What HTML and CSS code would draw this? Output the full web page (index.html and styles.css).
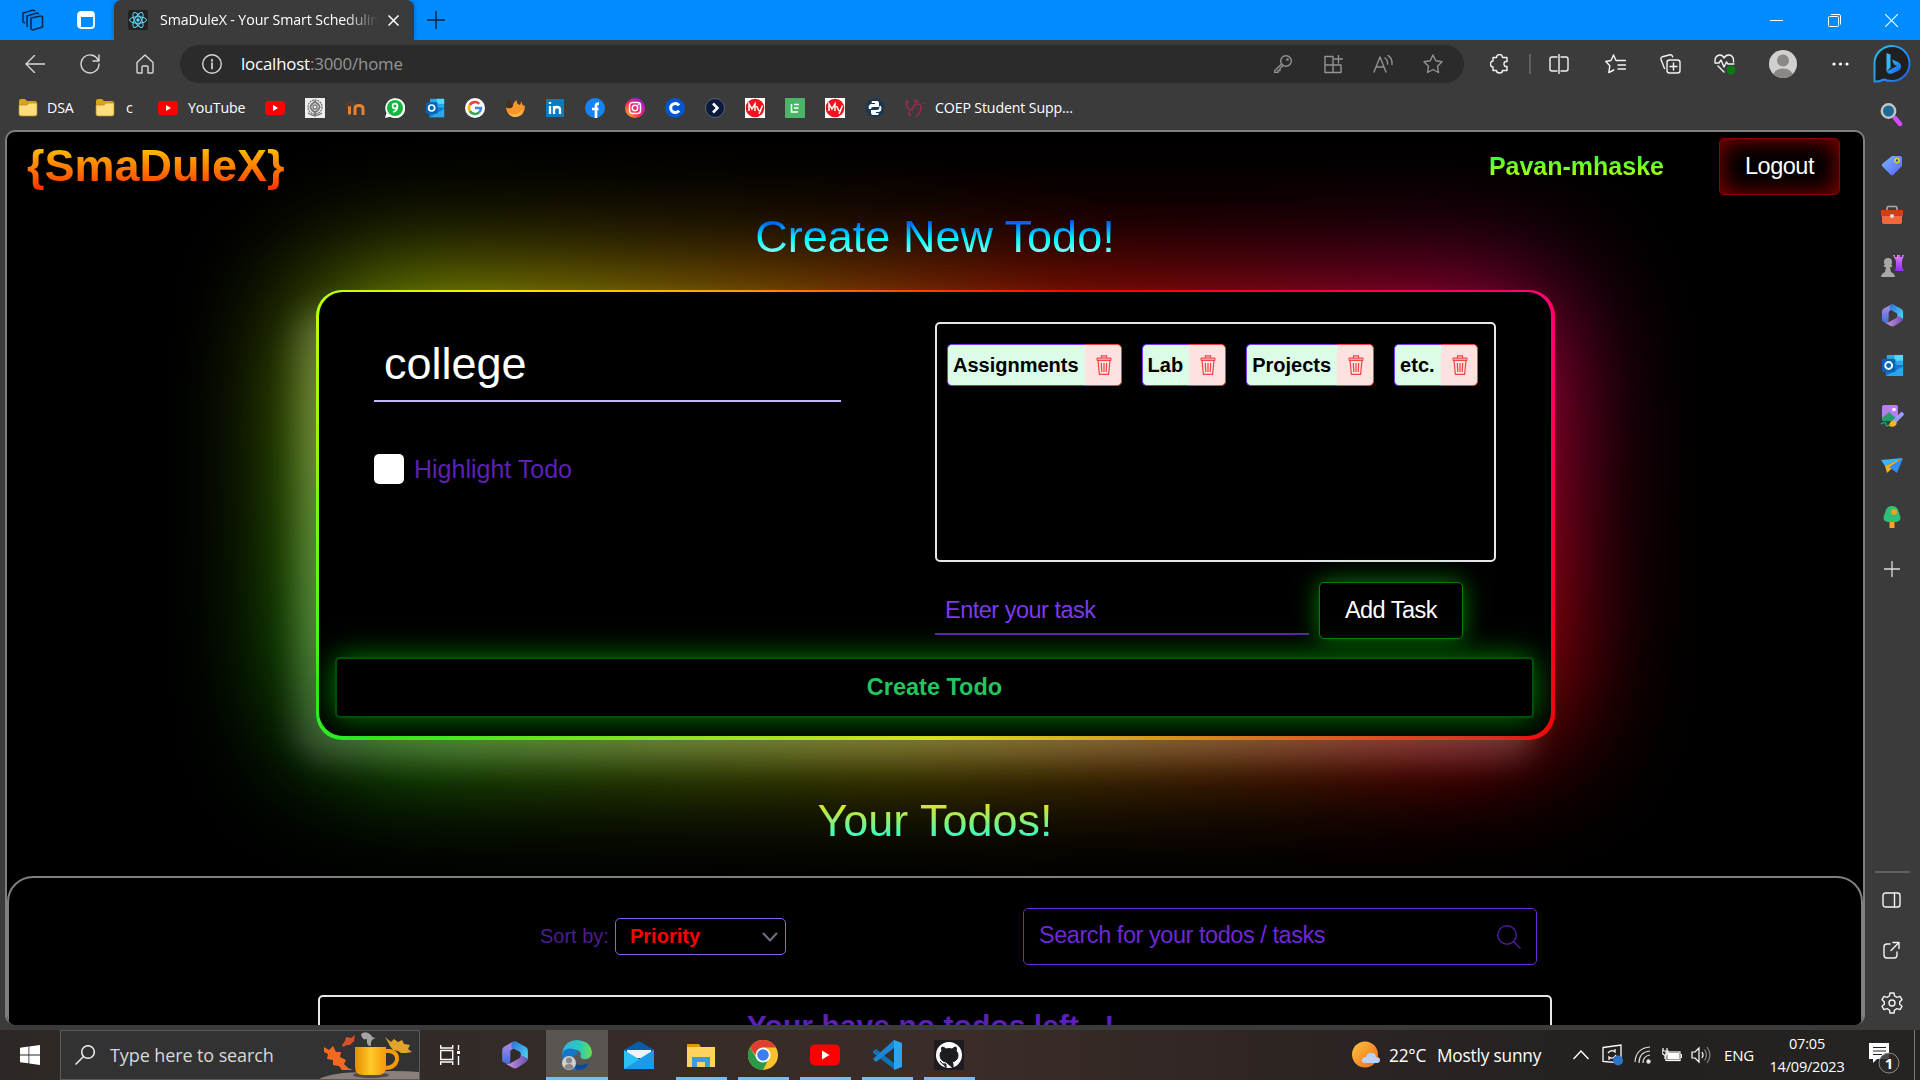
FILE: index.html
```html
<!DOCTYPE html>
<html lang="en">
<head>
<meta charset="utf-8">
<title>SmaDuleX - Your Smart Scheduling</title>
<link rel="stylesheet" href="styles.css">
</head>
<body>
<svg class="defs" width="0" height="0">
  <defs>
    <linearGradient id="gM1" x1="0" y1="0" x2="0" y2="1"><stop offset="0" stop-color="#b98ae8"/><stop offset="1" stop-color="#3b6fe0"/></linearGradient>
    <linearGradient id="gM2" x1="0" y1="0" x2="1" y2="1"><stop offset="0" stop-color="#2a6fd6"/><stop offset="1" stop-color="#4fdcf5"/></linearGradient>
    <linearGradient id="gM3" x1="0" y1="0" x2="1" y2="0"><stop offset="0" stop-color="#d49ae8"/><stop offset="1" stop-color="#6a4fb0"/></linearGradient>
    <linearGradient id="gIg" x1="0" y1="1" x2="1" y2="0"><stop offset="0" stop-color="#ffd000"/><stop offset=".45" stop-color="#ff1f60"/><stop offset="1" stop-color="#8a20ff"/></linearGradient>
    <linearGradient id="gBing" x1="0" y1="0" x2="1" y2="1"><stop offset="0" stop-color="#27c6f5"/><stop offset="1" stop-color="#1f5ee8"/></linearGradient>
    <linearGradient id="gEdge" x1="0" y1="0" x2="1" y2="0"><stop offset="0" stop-color="#2fb4e8"/><stop offset=".6" stop-color="#2cc8b8"/><stop offset="1" stop-color="#6be04a"/></linearGradient>
    <linearGradient id="gTag" x1="0" y1="0" x2="1" y2="1"><stop offset="0" stop-color="#7db8ff"/><stop offset="1" stop-color="#5a62ff"/></linearGradient>
    <linearGradient id="gMug" x1="0" y1="0" x2="1" y2="0"><stop offset="0" stop-color="#e88a00"/><stop offset=".5" stop-color="#ffc928"/><stop offset="1" stop-color="#f59a0c"/></linearGradient>
    <linearGradient id="gSun" x1="0" y1="0" x2="1" y2="1"><stop offset="0" stop-color="#f9c440"/><stop offset="1" stop-color="#f5681a"/></linearGradient>
    <linearGradient id="gRook" x1="0" y1="0" x2="0" y2="1"><stop offset="0" stop-color="#e07cff"/><stop offset="1" stop-color="#8d2df0"/></linearGradient>
  </defs>
  <symbol id="folder" viewBox="0 0 20 20"><path d="M1 3q0-2 2-2h4l2 2h8q2 0 2 2v4H1z" fill="#d9a514"/><path d="M1 7h8l2-2h8v11q0 2-2 2H3q-2 0-2-2z" fill="#ffdf7d" stroke="#b08a25" stroke-width=".7"/></symbol>
  <symbol id="yt" viewBox="0 0 20 20"><rect y="3" width="20" height="14" rx="3.2" fill="#f00"/><path d="M8 7l5 3-5 3z" fill="#fff"/></symbol>
  <symbol id="m365" viewBox="0 0 24 24"><path d="M10.500.5 2.500 5Q1 6 1 8v8.500q0 1.500 1.500 2l3 1q2 .5 2.500-2V9q0-1 1-1.600L14 4z" fill="url(#gM1)"/><path d="M9 1.500 12 0l9 5q2 1 2 3v8l-6-2.500V11q0-1-1-1.700L9 5.500z" fill="url(#gM2)"/><path d="M23 15q0 2-2 3.500L14 23q-2 1-4 0l-6.500-4q3 1 4.500 0l8-4.500q1-.7 1-2.500z" fill="url(#gM3)"/></symbol>
  <symbol id="outlook" viewBox="0 0 24 24"><path d="M6 1h17v11H6z" fill="#28a8ea"/><path d="M14 1h9v6h-9z" fill="#50d9ff"/><path d="M5 10l18 2v11H5z" fill="#1477c9"/><path d="M5 23l18-10v10z" fill="#28a8ea"/><rect x="1" y="5" width="14" height="14" rx="1.500" fill="#0364b8"/><circle cx="8" cy="12" r="3.600" fill="none" stroke="#fff" stroke-width="2"/></symbol>
  <symbol id="my" viewBox="0 0 20 20"><path d="M0 0h20v20H0z" fill="#fff"/><circle cx="10" cy="10" r="9.300" fill="#f0121c"/><path d="M4 13V6l3 5 3-5v7M11.500 8l2.500 5M17.500 7.500 14 16" fill="none" stroke="#fff" stroke-width="1.500"/></symbol>
  <symbol id="trash" viewBox="0 0 16 20"><path d="M1 3h14v2.500H1z" fill="#fca5a5" stroke="#ef4444"/><path d="M5.500 3V.8h5V3M2 5.500l1.400 13.800h9.200L14 5.500M5.300 8l.5 9M8 8v9M10.700 8l-.5 9" fill="none" stroke="#ef4444" stroke-width="1.200"/></symbol>
</svg>

<header class="tabs">
  <div class="cell tabtool"><svg width="22" height="24" viewBox="0 0 22 24" fill="none" stroke="#082a4c" stroke-width="1.600" stroke-linejoin="round"><path d="m9 10 10-2 1.500 1v10L11 22l-2-1z"/><path d="M6 19 5 18V8l10-3 2 1M3 15l-2-1V5l10-3 2 1"/></svg></div>
  <div class="cell tabtool"><svg width="18" height="18" viewBox="0 0 18 18"><rect x="1" y="1" width="16" height="16" rx="3" fill="none" stroke="#fff" stroke-width="1.800"/><path d="M1 2h16v4H1zM1 5h3v11H1z" fill="#fff"/></svg></div>
  <div class="tab">
    <svg width="20" height="20" viewBox="0 0 20 20"><rect width="20" height="20" rx="2" fill="#222"/><g fill="none" stroke="#61dafb"><ellipse cx="10" cy="10" rx="8.500" ry="3.300"/><ellipse cx="10" cy="10" rx="8.500" ry="3.300" transform="rotate(60 10 10)"/><ellipse cx="10" cy="10" rx="8.500" ry="3.300" transform="rotate(120 10 10)"/></g><circle cx="10" cy="10" r="1.700" fill="#61dafb"/></svg>
    <span class="tab-title">SmaDuleX - Your Smart Scheduling</span>
    <svg width="11" height="11" viewBox="0 0 11 11" stroke="#fff" stroke-width="1.500"><path d="m.5.5 10 10m0-10-10 10"/></svg>
  </div>
  <svg class="newtab" width="18" height="18" viewBox="0 0 18 18" stroke="#05203c" stroke-width="1.400"><path d="M9 0v18M0 9h18"/></svg>
  <div class="winbtns">
    <svg width="13" height="13" viewBox="0 0 13 13" stroke="#fff"><path d="M0 6.500h13"/></svg>
    <svg width="13" height="13" viewBox="0 0 13 13" fill="none" stroke="#fff"><rect x=".5" y="2.500" width="10" height="10" rx="1"/><path d="M3 .5h8q1.500 0 1.500 1.500v8.500"/></svg>
    <svg width="13" height="13" viewBox="0 0 13 13" stroke="#fff" stroke-width="1.100"><path d="m0 0 13 13m0-13L0 13"/></svg>
  </div>
</header>

<nav class="toolbar">
  <div class="cell w55"><svg width="20" height="18" viewBox="0 0 20 18" class="ln"><path d="M20 9H1m8.500-8.500L1 9l8.500 8.500"/></svg></div>
  <div class="cell w55"><svg width="20" height="20" viewBox="0 0 20 20" class="ln"><path d="M18.500 7A9 9 0 1 0 19 10M19 1v6h-6"/></svg></div>
  <div class="cell w55"><svg width="18" height="20" viewBox="0 0 18 20" class="ln"><path d="M1 8.500 9 1l8 7.500V18q0 1-1 1h-4v-6q0-1-1-1H7q-1 0-1 1v6H2q-1 0-1-1z"/></svg></div>
  <div class="address">
    <svg width="20" height="20" viewBox="0 0 20 20" class="ln"><circle cx="10" cy="10" r="9.300"/><path d="M10 9v5.500M10 5.500v1.500" stroke-width="1.700"/></svg>
    <span class="url">localhost<i>:3000/home</i></span>
    <div class="dim">
      <div class="cell w50"><svg width="18" height="18" viewBox="0 0 18 18" class="ln"><circle cx="12" cy="6" r="5.300"/><path d="m7.500 9-7 7v1.500H4v-2h2v-2l3-3"/><circle cx="13.500" cy="4.500" r=".6"/></svg></div>
      <div class="cell w50"><svg width="19" height="19" viewBox="0 0 19 19" class="ln"><path d="M9 1.500H1v16h16V10H1M9 1.500v16M14.500 0v8M10.500 4h8"/></svg></div>
      <div class="cell w50"><svg width="20" height="18" viewBox="0 0 20 18" class="ln"><path d="M1 17 7 2l6 15M3 12h8M12 3q3 2 2.500 6M15 .5q4.500 3 4 9"/></svg></div>
      <div class="cell w50"><svg width="20" height="20" viewBox="0 0 20 20" class="ln"><path d="m10 1 2.800 5.800 6.200.9-4.500 4.500 1 6.300L10 15.500l-5.500 3 1-6.300L1 7.700l6.200-.9z"/></svg></div>
    </div>
  </div>
  <div class="cell w50 ext"><svg width="20" height="20" viewBox="0 0 20 20" class="ln lit"><path d="M3 3.500h3.500q0-3 3-3t3 3H17v4q-3-.5-3 2.500t3 2.500v4h-4.500q0 2.500-3 2.500t-3-2.500H3V13q-2.500 0-2.500-3T3 7z"/></svg></div>
  <div class="sep"></div>
  <div class="cell w46"><svg width="20" height="20" viewBox="0 0 20 20" class="ln lit"><path d="M8 3H3Q1 3 1 5v10q0 2 2 2h5M12 3h5q2 0 2 2v10q0 2-2 2h-5M10 0v20"/></svg></div>
  <div class="cell w56 push5"><svg width="21" height="20" viewBox="0 0 21 20" class="ln lit"><path d="m11 6.500-2.500-5.500L6 6.500.8 7.500l4 4.300-1 6.700 5-2.500M8.500 1 11 6.500h9.500M13 11h7.500M13 15h7.500"/></svg></div>
  <div class="cell w54"><svg width="21" height="20" viewBox="0 0 21 20" class="ln lit"><rect x="7" y="6" width="13" height="13" rx="2.500"/><path d="M13.500 9v7M10 12.500h7M4.500 14.500 1 5.500Q.5 3.500 2.500 2.700L10 .8q2-.5 2.700 2"/></svg></div>
  <div class="cell w56"><svg width="22" height="21" viewBox="0 0 22 21" class="ln lit"><path d="M1 8q-.5-6 4.500-7Q9 .8 10 4q2-3.500 5.500-3Q20 2 19.500 8M1 9h4l2-3 3 7 2.500-5 1.500 2h6M4 12l6 6"/><circle cx="17" cy="16" r="4.500" fill="#0c7a12" stroke="none"/></svg></div>
  <div class="cell w56 push2"><svg width="28" height="28" viewBox="0 0 28 28"><clipPath id="av"><circle cx="14" cy="14" r="14"/></clipPath><circle cx="14" cy="14" r="14" fill="#d2d0ce"/><circle cx="14" cy="10.500" r="6" fill="#8a8886"/><ellipse cx="14" cy="27" rx="10.500" ry="8.500" fill="#8a8886" clip-path="url(#av)"/></svg></div>
  <div class="cell w58"><svg width="17" height="4" viewBox="0 0 17 4" fill="#fff"><circle cx="2" cy="2" r="1.600"/><circle cx="8.500" cy="2" r="1.600"/><circle cx="15" cy="2" r="1.600"/></svg></div>
  <div class="cell w46"><svg width="38" height="38" viewBox="0 0 38 38"><path d="M1.500 36.500V18A17.500 17.500 0 1 1 19 36q-5 0-8-1.500-5 2.500-9.500 2z" fill="#202020" stroke="url(#gBing)" stroke-width="2"/><path d="m13.500 8 4 1.500v13l-4 4z" fill="#35b8f5"/><path d="M13.500 26.500q1.500 2.500 4.500 2.500l6-2.500q5-2.500 4-6.500-1-2-3-3l-6-2.500 2 5 3 1.500z" fill="url(#gBing)"/></svg></div>
</nav>

<nav class="bookmarks">
  <svg width="20" height="20"><use href="#folder"/></svg><span class="bm dsa">DSA</span>
  <svg width="20" height="20"><use href="#folder"/></svg><span class="bm c">c</span>
  <svg width="20" height="20"><use href="#yt"/></svg><span class="bm ytb">YouTube</span>
  <div class="favs">
    <svg width="20" height="20"><use href="#yt"/></svg>
    <svg width="20" height="20" viewBox="0 0 20 20"><path d="M0 0h20v20H0z" fill="#eee"/><g fill="none" stroke="#777" stroke-width="1.300"><circle cx="10" cy="9" r="7" stroke-dasharray="2 .7"/><circle cx="10" cy="9" r="4.500"/><circle cx="10" cy="9" r="2"/><path d="m10 3 5 6-5 6-5-6zM3 15q7 5 14 0M10 14v5"/></g></svg>
    <svg width="20" height="20" viewBox="0 0 20 20" fill="none" stroke="#e8822c" stroke-width="3"><path d="M4.500 8v8.500M10 17v-7q0-2.500 4-2.500t4 3V17"/><path d="m0 7 6-3 3 2-5 2M2 7v3" stroke="#54433a" stroke-width="1.500"/></svg>
    <svg width="20" height="20" viewBox="0 0 20 20"><path d="M0 20 1.500 15A10 10 0 1 1 5 18.700z" fill="#fff"/><circle cx="10" cy="10" r="8" fill="#10b83c"/><circle cx="10" cy="8" r="2.400" fill="none" stroke="#fff" stroke-width="1.700"/><path d="M12.400 8q0 5-4.400 6" fill="none" stroke="#fff" stroke-width="1.700"/></svg>
    <svg width="20" height="20"><use href="#outlook"/></svg>
    <svg width="20" height="20" viewBox="0 0 20 20"><circle cx="10" cy="10" r="10" fill="#fff"/><g fill="none" stroke-width="2.600"><path d="M14.200 5.800A6 6 0 0 0 4.800 7" stroke="#ea4335"/><path d="M4.800 7a6 6 0 0 0 0 6" stroke="#fbbc05"/><path d="M4.800 13a6 6 0 0 0 9.200 1.400" stroke="#34a853"/><path d="M14 14.400a6 6 0 0 0 2-4.400h-6" stroke="#4285f4"/></g></svg>
    <svg width="20" height="20" viewBox="0 0 20 20"><path d="M1 9q4 3 7-1 0-4 4-6-1 4 3 5 1-3 2-4-1 4 3 5 0 10-9 11Q2 19 1 9z" fill="#f5962a"/><path d="M1 9q4 3 7-1l-2-3-2-4-2 3z" fill="#42301c"/><path d="M4 15q7 4 14-4-1 8-8 8-4 0-6-4z" fill="#ffb64a"/></svg>
    <svg width="20" height="20" viewBox="0 0 20 20"><rect x="1" y="1" width="18" height="18" fill="#0a7bbd"/><path d="M5 8v8M5 4v2M9 16V8m0 4q0-3 3-3t3 3v4" fill="none" stroke="#fff" stroke-width="2.300"/></svg>
    <svg width="20" height="20" viewBox="0 0 20 20"><circle cx="10" cy="10" r="10" fill="#1683f5"/><path d="M11 20V8q0-2.500 3-2.300M7 11h6.500" fill="none" stroke="#fff" stroke-width="2.700"/></svg>
    <svg width="20" height="20" viewBox="0 0 20 20"><circle cx="10" cy="10" r="10" fill="url(#gIg)"/><g fill="none" stroke="#fff" stroke-width="1.500"><rect x="4.500" y="4.500" width="11" height="11" rx="3"/><circle cx="10" cy="10" r="2.700"/></g><circle cx="13.300" cy="6.700" r=".8" fill="#fff"/></svg>
    <svg width="20" height="20" viewBox="0 0 20 20"><circle cx="10" cy="10" r="10" fill="#0056d2"/><path d="M14 7.300a4.600 4.600 0 1 0 0 5.400" fill="none" stroke="#fff" stroke-width="3"/></svg>
    <svg width="20" height="20" viewBox="0 0 20 20"><circle cx="10" cy="10" r="9.500" fill="#0b1a3c" stroke="#59617a"/><path d="m8 5.500 4.500 4.500L8 14.500" fill="none" stroke="#fff" stroke-width="2.500"/></svg>
    <svg width="20" height="20"><use href="#my"/></svg>
    <svg width="20" height="20" viewBox="0 0 20 20"><path d="M0 0h20v20H0z" fill="#4cb466"/><path d="M6.500 6v8H13M9 6.500h5M9 10h4.500" fill="none" stroke="#fff" stroke-width="1.500"/></svg>
    <svg width="20" height="20"><use href="#my"/></svg>
    <svg width="20" height="20" viewBox="0 0 20 20"><circle cx="10" cy="10" r="9.500" fill="#173850"/><path d="M7 3h5q2 0 2 2v4H8q-2 0-2 2H4q-1.500-4 2-5h4V5H6.500zM13 17H8q-2 0-2-2v-3h6q2.500 0 2.500-4H16q1.500 5-2 6h-3v1h3z" fill="#fff"/></svg>
    <svg width="20" height="20" viewBox="0 0 20 20" fill="none" stroke="#962a50" stroke-width="1.700"><path d="M1 5q1 7 6 7 1-5 5-6 4 0 4 3 0 6-5 10M4 13q-1 3 2 5M18 5l1 1"/><circle cx="11" cy="3" r="1"/><circle cx="2" cy="4" r="1"/></svg>
  </div>
  <span class="bm coep">COEP Student Supp...</span>
</nav>

<div class="workspace">
  <main class="page">
    <div class="topbar">
      <div class="logo">{SmaDuleX}</div>
      <div class="user">Pavan-mhaske</div>
      <button class="btn logout">Logout</button>
    </div>
    <h1 class="title create-title">Create New Todo!</h1>
    <section class="card">
      <div class="rainbow glow"></div>
      <div class="rainbow frame"></div>
      <div class="card-body">
        <div class="columns">
          <div class="left">
            <div class="name-input">college</div>
            <label class="check"><span class="box"></span>Highlight Todo</label>
          </div>
          <div class="right">
            <div class="tasks">
              <div class="chip"><span>Assignments</span><b><svg width="16" height="20"><use href="#trash"/></svg></b></div>
              <div class="chip"><span>Lab</span><b><svg width="16" height="20"><use href="#trash"/></svg></b></div>
              <div class="chip"><span>Projects</span><b><svg width="16" height="20"><use href="#trash"/></svg></b></div>
              <div class="chip"><span>etc.</span><b><svg width="16" height="20"><use href="#trash"/></svg></b></div>
            </div>
            <div class="add-row">
              <div class="task-input">Enter your task</div>
              <button class="btn add">Add Task</button>
            </div>
          </div>
        </div>
        <button class="btn create">Create Todo</button>
      </div>
    </section>
    <h1 class="title todos-title">Your Todos!</h1>
    <section class="todos">
      <div class="filters">
        <span class="sort">Sort by:</span>
        <div class="select">Priority<svg width="16" height="10" viewBox="0 0 16 10" fill="none" stroke="#6b7280" stroke-width="2" stroke-linecap="round"><path d="m1.500 1.500 6.500 7 6.500-7"/></svg></div>
        <div class="search"><span>Search for your todos / tasks</span><svg width="24" height="24" viewBox="0 0 24 24" fill="none" stroke="#4c1d95" stroke-width="1.500"><circle cx="10" cy="10" r="9.200"/><path d="m16.500 16.500 7 7"/></svg></div>
      </div>
      <div class="list">Your have no todos left...!</div>
    </section>
  </main>
  <aside class="sidebar">
    <svg width="24" height="24" viewBox="0 0 24 24"><path d="m15 16 5 6" stroke="#d44cff" stroke-width="4.500" stroke-linecap="round"/><circle cx="8.500" cy="9" r="6.700" fill="#1d6a94" stroke="#c4c4c4" stroke-width="2.400"/></svg>
    <svg width="24" height="24" viewBox="0 0 24 24"><path d="M12 3h8q2 0 2 2v8l-9 9q-2 1-3-1l-7-7q-2-2-1-3z" fill="url(#gTag)"/><circle cx="17" cy="7.500" r="2" fill="#2c48a0" stroke="#f8d21a" stroke-width="1.500"/></svg>
    <svg width="24" height="24" viewBox="0 0 24 24"><path d="M7 8V5q0-1.500 1.500-1.500h7Q17 3.500 17 5v3" fill="none" stroke="#aaa" stroke-width="1.600"/><path d="M2 11h20v8q0 2-2 2H4q-2 0-2-2z" fill="#f2683c"/><path d="M1 7h22v6H1z" fill="#cf3f0e"/><circle cx="12" cy="13" r="2" fill="#ddd"/></svg>
    <svg width="24" height="24" viewBox="0 0 24 24"><path d="M13 1h2v2h2V1h3v2h2V1h2l-2 6v6l2 4h-9l1-4V7z" fill="url(#gRook)"/><g fill="#a8a8a8"><circle cx="8" cy="8" r="4"/><path d="M4 11h8v2h-2l1 5q4 2 4 5H1q0-3 4-5l1-5H4z"/></g></svg>
    <svg width="23" height="23"><use href="#m365"/></svg>
    <svg width="23" height="23"><use href="#outlook"/></svg>
    <svg width="24" height="24" viewBox="0 0 24 24"><rect x="2" y="1" width="16" height="16" rx="2" fill="#b97cf5"/><path d="m2 14 7-6 9 8v1H4q-2 0-2-3z" fill="#23a06a"/><circle cx="14" cy="5.500" r="1.800" fill="#fff"/><path d="m14 18 9-9" stroke="#9a9cff" stroke-width="4"/><path d="M9 22q1-6 5-5t2 4-7 1z" fill="#fbb917"/><path d="M1 20q5-3 5 0t3 1" fill="none" stroke="#23a06a" stroke-width="1.500"/></svg>
    <svg width="24" height="24" viewBox="0 0 24 24"><path d="M1 6 23 4 5 12z" fill="#40b4f5"/><path d="M23 4 5 12l2 7z" fill="#f6b21b"/><path d="M23 4 9 13l8 6z" fill="#348ceb"/></svg>
    <svg width="24" height="24" viewBox="0 0 24 24"><path d="M9.500 15h5v8h-5z" fill="#f3a712"/><path d="M12 1q6 0 7 7 4 8-3 9H8q-7-1-3-9 1-7 7-7z" fill="#2fc078"/><path d="M14 4v6m-3-3h6" stroke="#f5a31a" stroke-width="3"/></svg>
    <svg class="plus" width="16" height="16" viewBox="0 0 16 16" stroke="#ddd" stroke-width="1.300"><path d="M8 0v16M0 8h16"/></svg>
    <div class="side-rule"></div>
    <svg width="20" height="16" viewBox="0 0 20 16" class="ln lit"><rect x="1" y="1" width="17" height="14" rx="2.500"/><path d="M12.500 1v14"/></svg>
    <svg width="18" height="18" viewBox="0 0 18 18" class="ln lit"><path d="M7 3H4Q1 3 1 6v8q0 3 3 3h7q3 0 3-3v-3M10 1.500h6v6M16 1.500l-8 8"/></svg>
    <svg width="22" height="22" viewBox="0 0 22 22" class="ln lit"><circle cx="11" cy="11" r="3"/><path d="M9 1h4l.6 3 2.400 1.300 3-1 2 3.400-2.300 2v2.600l2.300 2-2 3.400-3-1-2.400 1.300L13 21H9l-.6-3L6 16.700l-3 1-2-3.400 2.300-2V9.700L1 7.700l2-3.400 3 1L8.400 4z"/></svg>
  </aside>
</div>

<footer class="taskbar">
  <div class="cell w60"><svg width="20" height="20" viewBox="0 0 20 20" fill="#fff"><path d="M0 2.800 8.500 1.600v7.900H0zM9.300 1.500 20 0v9.500H9.300zM0 10.400h8.500v7.900L0 17.200zM9.300 10.400H20V20L9.300 18.500z"/></svg></div>
  <div class="tsearch">
    <svg width="20" height="20" viewBox="0 0 20 20" fill="none" stroke="#eee" stroke-width="1.500"><circle cx="13" cy="7" r="6.300"/><path d="m8.500 11.500-8 8"/></svg>
    <span>Type here to search</span>
    <svg class="autumn" width="100" height="48" viewBox="0 0 100 48"><path d="M0 48q15-7 45-7 30-2 55 0v7z" fill="#8b7f7c"/><ellipse cx="52" cy="44" rx="18" ry="3" fill="#54494a"/><path d="M5 16l5 3 4-4 3 6 5 0-1 5 6 3-2 4 4 4 5 2-7 0-4 0-3-4-6-1 0-5-6-1 1-5-4-2z" fill="#f26a21"/><path d="M23 14l3-4 1-4 5 1 4-3-1 6-4 4-3 0-4 2z" fill="#d8502a"/><path d="M66 6l6 5 3-3 4 3 4-2 2 4 6 1-2 4 4 3-6 1-5 0-3-2-5-1-3-4-2-4z" fill="#e2a42c"/><path d="M66 20h5q8 2 7 9-2 8-12 8" fill="none" stroke="#f59a0c" stroke-width="4"/><path d="M36 16h31v20q0 8-8 8H44q-8 0-8-8z" fill="url(#gMug)"/><path d="M42 3q5-4 10 1 1 3 5 3-6 1-5 8-5 0-4-7-5 2-6-5z" fill="#a5a5a5"/></svg>
  </div>
  <div class="cell w60 tv"><svg width="20" height="20" viewBox="0 0 20 20" fill="none" stroke="#fff" stroke-width="1.400"><path d="M.7 5.500h12v9H.7zM.7 0v3h12V0M.7 20v-3h12v3M18.500 0v5M18.500 11v9"/><path d="M17 6h3v3h-3z" fill="#fff" stroke="none"/></svg></div>
  <div class="cell app"><svg width="28" height="28"><use href="#m365"/></svg></div>
  <div class="cell app active"><svg width="30" height="30" viewBox="0 0 30 30"><path d="M0 15Q1 1 15 0q14 1 15 13-1 7-9 6-4-1-2-5-2-5-9-4Q3 10 0 15z" fill="url(#gEdge)"/><path d="M0 15q2-8 11-6 5 1 5 5-6 1-5 7 4 8 16 3-6 8-15 6Q0 27 0 15z" fill="#1575c8"/><path d="M11 21q4 7 16 2-4 8-12 7-5-3-4-9z" fill="#0c4b95"/><circle cx="7" cy="23" r="7" fill="#d2d0ce"/><circle cx="7" cy="20.500" r="3" fill="#8a8886"/><path d="M2.500 28q0-4 4.500-4t4.500 4q-4 3-9 0z" fill="#8a8886"/></svg></div>
  <div class="cell app"><svg width="30" height="30" viewBox="0 0 30 30"><path d="M0 10 15 1l15 9v5H0z" fill="#0a5ba8"/><path d="M3 10h24v8H3z" fill="#f3f3f3"/><path d="M0 10l15 9 15-9v19H0z" fill="#2cc0f5"/><path d="M0 29 30 10v19z" fill="#1a9ae8"/></svg></div>
  <div class="cell app open"><svg width="28" height="26" viewBox="0 0 28 26"><path d="M0 2h12l2 3H0z" fill="#dc9a08"/><path d="M0 5h28v20H0z" fill="#ffd45e"/><path d="M5 25V15h18v10h-5v-5h-8v5z" fill="#3a9be0"/></svg></div>
  <div class="cell app open"><svg width="30" height="30" viewBox="0 0 30 30"><circle cx="15" cy="15" r="15" fill="#f9c22c"/><path d="M2 7.500a15 15 0 0 1 26 0H15L9 17z" fill="#e03e30"/><path d="M2 7.500 9 19l11 1-5 10A15 15 0 0 1 2 7.500z" fill="#2a9a48"/><circle cx="15" cy="15" r="7.500" fill="#fff"/><circle cx="15" cy="15" r="5.800" fill="#3a7ef0"/></svg></div>
  <div class="cell app open"><svg width="30" height="30"><use href="#yt"/></svg></div>
  <div class="cell app open"><svg width="30" height="30" viewBox="0 0 30 30"><path d="M1 11l3-2 18 14v6L1 13z" fill="#0d72b8"/><path d="M1 19 22 0v8L4 22z" fill="#1a86d4"/><path d="m22 0 8 3v24l-8 3z" fill="#2ba5f2"/></svg></div>
  <div class="cell app open"><svg width="30" height="30" viewBox="0 0 30 30"><path d="M0 0h30v30H0z" fill="#1e1c20"/><circle cx="15" cy="15" r="13" fill="#fff"/><path d="M12 28v-4q-4 1-6-3M12 22q-6-1-6-7 0-3 2-4-1-2 0-4 2 0 4 2 3-1 6 0 2-2 4-2 1 2 0 4 2 1 2 4 0 6-6 7 1 1 1 2v4z" fill="#1e1c20" stroke="#1e1c20"/></svg></div>
  <div class="tray">
    <svg width="30" height="28" viewBox="0 0 30 28"><circle cx="13" cy="13.500" r="13" fill="url(#gSun)"/><path d="M12 22q-3-1-2-4 1-2 4-2 2-5 6-4 4 0 4 4 4 0 4 3t-3 3z" fill="#b8d2f8"/></svg>
    <span class="temp">22°C</span><span class="sky">Mostly sunny</span>
    <svg class="t-up" width="16" height="10" viewBox="0 0 16 10" fill="none" stroke="#fff" stroke-width="1.400"><path d="m.5 9 7.500-8 7.500 8"/></svg>
    <svg class="t-sync" width="22" height="22" viewBox="0 0 22 22" fill="none" stroke="#fff" stroke-width="1.300"><path d="M1 3.500 19 1v18L1 17.500zM6 9q3-4 7-1V5M14 11q-3 5-7 2v3"/><circle cx="16" cy="16.500" r="5" fill="#2d73c4" stroke="none"/></svg>
    <svg class="t-wifi" width="17" height="18" viewBox="0 0 17 18" fill="none" stroke="#ddd" stroke-width="1.200"><path d="M1 16Q2 2 16 1M5 17Q5 6 16 5M9 17q0-7 7-8"/><circle cx="14.500" cy="15.500" r="1.600" fill="#fff"/></svg>
    <svg class="t-bat" width="20" height="15" viewBox="0 0 20 15" fill="none" stroke="#fff" stroke-width="1.200"><rect x="4" y="4" width="14" height="8.500"/><path d="M6 5.500h10.500v5.500H6z" fill="#fff"/><path d="M19.400 6v4M1 0v3M5 0v3M0 3h6v2L4 7H2L0 5zM3 7v4"/></svg>
    <svg class="t-vol" width="20" height="18" viewBox="0 0 20 18" fill="none" stroke="#fff" stroke-width="1.200"><path d="M1 6h3l4-4v14l-4-4H1zM11 6q2 3 0 6"/><path d="M13.500 3.500q4 5.500 0 11M16 1q6 8 0 16" stroke="#888"/></svg>
    <span class="lang">ENG</span>
    <div class="clock"><span>07:05</span><span>14/09/2023</span></div>
    <div class="notif"><svg width="32" height="34" viewBox="0 0 32 34"><path d="M0 1h20v16H8l-4 4v-4H0z" fill="#fff"/><path d="M4 5.500h13M4 9h13M4 12.500h9" stroke="#222"/><circle cx="20" cy="21" r="10" fill="#2b2a29" fill-opacity=".85" stroke="#8a8a8a"/></svg><em>1</em></div>
    <div class="desk"></div>
  </div>
</footer>
</body>
</html>
```
FILE: styles.css
```css
* { box-sizing: border-box; }
body { margin: 0; width: 1920px; height: 1080px; overflow: hidden; background: #3b3b3b; color: #fff; font-family: "Open Sans", "Noto Sans", sans-serif; display: flex; flex-direction: column; }
svg { display: block; flex: none; }
.defs { position: absolute; }
.cell { display: flex; align-items: center; justify-content: center; flex: none; }
.w46 { width: 46px; } .w50 { width: 50px; } .w54 { width: 54px; } .w55 { width: 55px; } .w56 { width: 56px; } .w58 { width: 58px; } .w60 { width: 60px; }
.push5 { margin-left: 5px; } .push2 { margin-left: 2px; }
.ln { fill: none; stroke: #d8d8d8; stroke-width: 1.4; stroke-linejoin: round; stroke-linecap: round; }
.lit { stroke: #f4f4f4; }

.tabs { height: 40px; flex: none; background: #008cff; display: flex; align-items: center; padding-left: 6px; }
.tabtool { width: 53px; }
.tab { width: 300px; height: 40px; margin-left: 2px; padding: 0 14px; background: #3b3b3b; border-radius: 8px 8px 0 0; display: flex; align-items: center; box-shadow: 0 0 4px #00000060; clip-path: inset(0 -4px 0 -4px); }
.tab-title { width: 218px; margin: 0 10px 2px 12px; overflow: hidden; white-space: nowrap; font-size: 14.2px; letter-spacing: -.1px; -webkit-mask: linear-gradient(90deg, #000 85%, transparent); mask: linear-gradient(90deg, #000 85%, transparent); }
.newtab { margin-left: 13px; }
.winbtns { margin-left: auto; margin-right: 22px; display: flex; gap: 44.500px; }

.toolbar { height: 48px; flex: none; display: flex; align-items: center; padding-left: 7px; }
.address { width: 1284px; height: 38px; margin: 0 10px 0 8px; padding: 0 6px 0 22px; border-radius: 19px; background: #2b2b2b; display: flex; align-items: center; }
.url { margin: 0 0 2px 19px; font-size: 16.8px; letter-spacing: -.15px; }
.url i { font-style: normal; color: #959595; }
.dim { margin-left: auto; display: flex; opacity: .6; }
.ext { padding-left: 2px; }
.sep { width: 2px; height: 20px; margin: 0 5px; background: #606060; }

.bookmarks { height: 42px; flex: none; padding: 0 0 2px 18px; display: flex; align-items: center; font-size: 14.2px; }
.bm { white-space: nowrap; letter-spacing: -.15px; margin-bottom: 2px; }
.dsa { width: 48px; margin-left: 9px; }
.c { width: 32px; margin-left: 11px; }
.ytb { width: 77px; margin-left: 10px; }
.favs { display: flex; gap: 20px; }
.coep { margin-left: 10px; }

.workspace { height: 900px; flex: none; display: flex; }
.page { width: 1860px; height: 895px; margin-left: 5px; flex: none; overflow: hidden; isolation: isolate; background: #000; border: 2px solid #7f7f7f; border-bottom: 0; border-radius: 10px; font-family: "Liberation Sans", Arial, sans-serif; }
.topbar { height: 68px; padding: 0 23px 0 20px; display: flex; align-items: center; }
.logo { margin-right: auto; font-size: 45px; font-weight: 700; line-height: 50px; color: transparent; background: linear-gradient(#ffc800 10%, #ff9a00 35%, #ff5a00 75%, #ff2a00); -webkit-background-clip: text; background-clip: text; }
.user { margin-right: 55px; font-size: 25px; font-weight: 700; color: transparent; background: linear-gradient(#1cff40, #d0ff00); -webkit-background-clip: text; background-clip: text; }
.btn { font: 23.5px "Liberation Sans", Arial, sans-serif; letter-spacing: -.5px; color: #fff; background: #000; border-radius: 5px; padding: 0; height: 57px; }
.logout { width: 121px; border: 1px solid #8b0000; box-shadow: inset 0 0 25px #900000; }
.title { margin: 0; font-size: 45px; line-height: 50px; font-weight: 400; text-align: center; }
.create-title { margin: 12px auto 28px; width: 380px; white-space: nowrap; color: transparent; background: linear-gradient(#0030ff 10%, #00ffff 55%, #a0fff0 85%); -webkit-background-clip: text; background-clip: text; }
.card { position: relative; width: 1239px; height: 450px; margin-left: 309px; padding: 2px 4px 4px 3px; border-radius: 26px; box-shadow: -20px 20px 30px rgba(255, 255, 255, .2); }
.rainbow { position: absolute; inset: 0; border-radius: 26px; background: linear-gradient(90deg, #30f028 3%, #8cec2c 25%, #ecec20 50%, #ec7a28 75%, #ee2a28 95%, #ff0008); }
.rainbow::before { content: ""; position: absolute; inset: 0; border-radius: inherit; background: linear-gradient(90deg, #c4ff00, #fff000 14%, #ff9c00 34%, #ff3c00 50%, #ff0000 62%, #ff0078 98%); -webkit-mask: linear-gradient(#000, transparent); mask: linear-gradient(#000, transparent); }
.glow { z-index: -1; filter: blur(67px); opacity: .85; background: linear-gradient(90deg, #20f010 3%, #8cec10 25%, #ecdc00 50%, #f07000 75%, #ff0000 92%); }
.card-body { position: relative; height: 444px; padding: 30px 14px 0 16px; border-radius: 24px; background: #000; }
.columns { display: flex; gap: 94px; height: 317px; padding-left: 39px; }
.left { width: 467px; }
.right { width: 561px; }
.name-input { height: 80px; padding: 17px 11px 0 10px; border-bottom: 2px solid #c4b5fd; font-size: 45px; line-height: 50px; }
.check { margin-top: 52px; display: flex; align-items: center; gap: 10px; font-size: 25px; line-height: 30px; color: #5b21b6; }
.box { width: 30px; height: 30px; border-radius: 5px; background: #fff; }
.tasks { height: 240px; padding: 20px 10px; border: 2px solid #e5e7eb; border-radius: 5px; display: flex; align-items: flex-start; gap: 20px; }
.chip { height: 42px; display: flex; font-size: 20px; font-weight: 700; line-height: 40px; color: #000; }
.chip span { padding: 0 6px 0 5px; background: #dcfce7; border: 1px solid #7c3aed; border-right: 0; border-radius: 5px 0 0 5px; }
.chip b { width: 37px; padding-left: 2px; background: #fee2e2; border: 1px solid #ef4444; border-left: 0; border-radius: 0 5px 5px 0; display: flex; align-items: center; justify-content: center; }
.add-row { display: flex; gap: 10px; margin-top: 20px; }
.task-input { width: 374px; height: 53px; padding: 15px 10px 0; border-bottom: 2px solid #5b21b6; font-size: 23.5px; letter-spacing: -.5px; line-height: 26px; color: #7c3aed; }
.add { width: 144px; border: 1px solid #008000; box-shadow: 0 0 25px #008000; }
.create { display: block; width: 1199px; height: 61px; margin-top: 18px; border: 2px solid #005200; font-weight: 700; letter-spacing: 0; color: #22c55e; box-shadow: 0 0 30px #008000; position: relative; }
.todos-title { margin: 56px auto 30px; width: 300px; color: transparent; background: linear-gradient(#ffd800 10%, #d4e62e 22%, #30ffc8 82%); -webkit-background-clip: text; background-clip: text; }
.todos { height: 200px; padding-top: 30px; background: #000; border: 2px solid #7f7f7f; border-radius: 26px 26px 0 0; }
.filters { height: 57px; padding-left: 531px; display: flex; align-items: center; }
.sort { width: 75px; font-size: 20px; color: #4c1d95; }
.select { width: 171px; height: 37px; padding: 0 7px 0 14px; border: 1px solid #8b5cf6; border-radius: 5px; display: flex; align-items: center; justify-content: space-between; font-size: 20px; font-weight: 700; color: #f00; }
.search { width: 514px; height: 57px; margin-left: 237px; padding: 0 15px 0 15px; border: 1px solid #6d28d9; border-radius: 5px; display: flex; align-items: center; justify-content: space-between; font-size: 23.5px; letter-spacing: -.45px; color: #6d28d9; }
.search span { margin-bottom: 2px; }
.list { width: 1234px; height: 90px; margin: 30px 0 0 309px; padding: 9px 9px 0 0; border: 2px solid #e5e7eb; border-radius: 5px; text-align: center; font-size: 30px; line-height: 40px; letter-spacing: .05px; font-weight: 700; color: #5b21b6; }

.sidebar { width: 54px; height: 895px; display: flex; flex-direction: column; align-items: center; }
.sidebar svg { margin-bottom: 26.6px; }
.sidebar svg:first-child { margin-top: -28px; }
.sidebar .plus { margin: 6px 0 auto; }
.side-rule { width: 35px; height: 2px; margin-bottom: 19px; background: #606060; }
.sidebar .side-rule ~ svg { margin-bottom: 33px; }
.sidebar .side-rule ~ svg:last-child { margin-bottom: 11px; }

.taskbar { height: 50px; flex: none; background: linear-gradient(90deg, #2d2725, #322b28 25%, #3b2c28 50%, #2b2422 70%, #232120 85%, #262423); display: flex; }
.tsearch { width: 360px; border: 1px solid #5a5a5a; background: #323232; display: flex; align-items: center; padding-left: 14px; }
.tsearch span { margin-left: 15px; font-size: 18px; color: #d8d8d8; letter-spacing: -.1px; white-space: nowrap; }
.autumn { margin-left: auto; }
.tv { margin-right: 4px; }
.app { width: 62px; }
.active { background: #5b5552; box-shadow: inset 0 -3px #76bbff; }
.open { background: linear-gradient(#76bbff, #76bbff) center bottom / 51px 3px no-repeat; }
.tray { margin-left: auto; width: 568px; display: flex; align-items: center; font-size: 17.3px; letter-spacing: -.2px; white-space: nowrap; }
.temp { width: 48px; margin-left: 7px; }
.sky { width: 106px; }
.t-up { margin-left: 30px; } .t-sync { margin-left: 13px; } .t-wifi { margin-left: 10px; } .t-bat { margin-left: 11px; } .t-vol { margin-left: 9px; }
.lang { width: 34px; margin-left: 13px; font-size: 15px; }
.clock { width: 98px; font-size: 14.5px; line-height: 23px; text-align: center; display: flex; flex-direction: column; }
.notif { position: relative; width: 32px; margin-left: 13px; }
.notif svg { margin-top: 8px; }
.notif em { position: absolute; left: 10px; top: 17px; width: 20px; text-align: center; font: 700 15px/24px "Open Sans", sans-serif; }
.desk { width: 1px; height: 50px; margin-left: 13px; background: #777; }
```
